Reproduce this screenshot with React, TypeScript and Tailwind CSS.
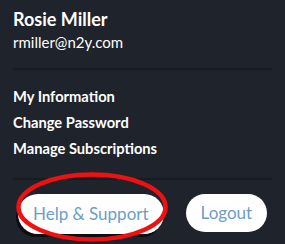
export default function App() {
    const menuList: string[] = ["My Information", "Change Password", "Manage Subscriptions"]

    return (
        <div className="relative w-[285px] h-[244px] overflow-hidden bg-[#1f232b] font-['Lato',sans-serif] text-white">
            <div className="flex flex-col pl-[13px] pr-[13px] pt-[7px]">
                <p className="text-[18px] font-bold leading-[24px]">Rosie Miller</p>
                <p className="text-[15px] leading-[20px] mt-[1px]">rmiller@n2y.com</p>

                <div className="h-[2px] bg-[#181b21] mt-[16px]"></div>

                <div className="flex flex-col mt-[13px]">
                    {menuList.map(item => (
                        <p key={item} className="text-[14.7px] font-bold leading-[26px]">{item}</p>
                    ))}
                </div>

                <div className="h-[2px] bg-[#181b21] mt-[17px]"></div>

                <div className="flex items-start gap-[22px] pl-[5px] mt-[14px]">
                    <button className="h-[40px] px-[15px] rounded-full bg-white text-[#6d9dc5] text-[17px] shadow-[-2px_3px_0_#0b0d10]">
                        Help &amp; Support
                    </button>
                    <button className="h-[38px] px-[15px] rounded-full bg-white text-[#6d9dc5] text-[17px]">
                        Logout
                    </button>
                </div>
            </div>

            {/* red annotation ring */}
            <svg className="absolute left-0 top-0" width="285" height="244" viewBox="0 0 285 244">
                <ellipse cx="92" cy="207" rx="73.5" ry="32.5" fill="none" stroke="#ee1111" strokeWidth="4.5" />
            </svg>
        </div>
    )
}
